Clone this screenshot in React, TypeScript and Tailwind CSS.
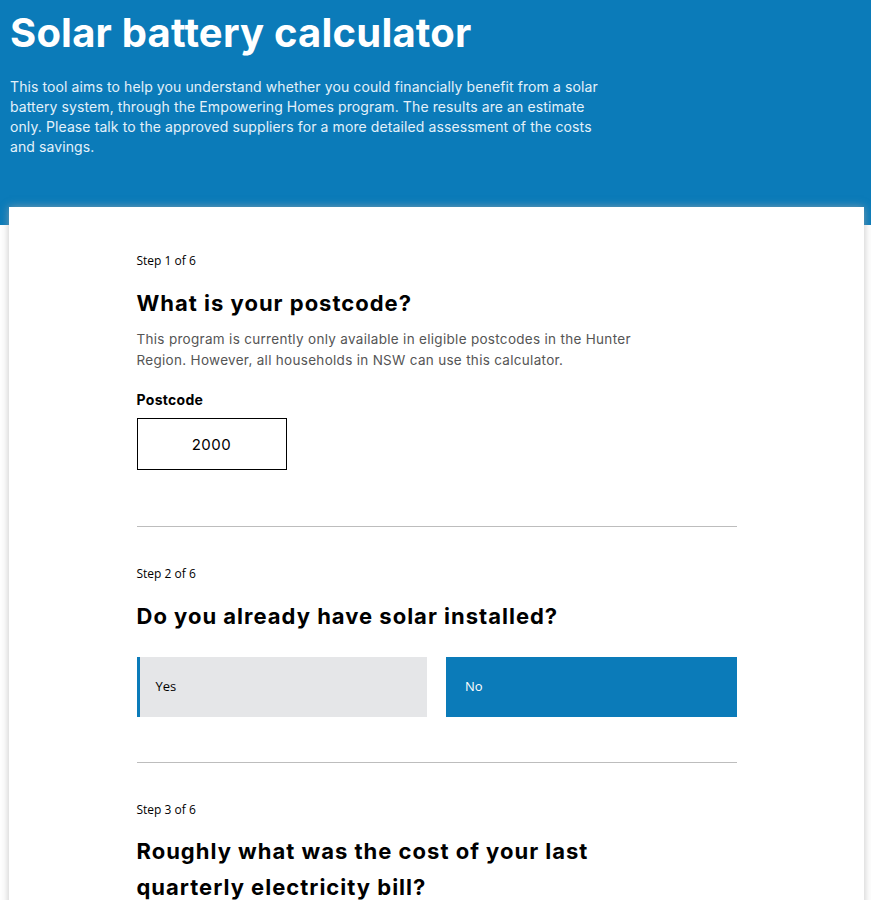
import React from 'react';

const headFont = { fontFamily: 'Inter, "Open Sans", sans-serif' };

const StepLabel: React.FunctionComponent<{n: number}> = ({n}) => (
    <p className="text-[12px] leading-[18px] text-black" style={{fontFamily: '"Open Sans", "Noto Sans", sans-serif'}}>Step {n} of 6</p>
);

const App: React.FunctionComponent = () => {
    const [solar, setSolar] = React.useState<'yes' | 'no'>('no');
    return (
        <div className="min-h-[900px] bg-white" style={headFont}>
            <div className="h-[225px] bg-[#0b7bb9] px-[10px] pt-[10px]">
                <h1 className="text-[40px] leading-[46px] font-bold text-white tracking-[0.2px]">Solar battery calculator</h1>
                <p className="mt-[21px] max-w-[600px] text-[14px] leading-[20px] tracking-[0.1px] text-[#e3f1fa]">
                    This tool aims to help you understand whether you could financially benefit from a solar battery system, through the Empowering Homes program. The results are an estimate only. Please talk to the approved suppliers for a more detailed assessment of the costs and savings.
                </p>
            </div>
            <div className="relative ml-[9px] mr-[7px] -mt-[18px] bg-white shadow-[0_0_8px_rgba(170,170,170,0.7)] pt-[45px] pb-10">
                <div className="mx-auto max-w-[600px]">
                    <StepLabel n={1}/>
                    <h2 className="mt-[17px] text-[22px] leading-[32px] tracking-[1px] font-bold text-black">What is your postcode?</h2>
                    <p className="mt-[10px] max-w-[500px] text-[13.5px] leading-[21px] tracking-[0.3px] text-[#555]">
                        This program is currently only available in eligible postcodes in the Hunter Region. However, all households in NSW can use this calculator.
                    </p>
                    <label htmlFor="postcode" className="mt-[19px] block text-[14px] leading-[20px] tracking-[0.3px] font-bold text-black">Postcode</label>
                    <input id="postcode" defaultValue="2000" className="mt-[8px] block h-[52px] w-[150px] border border-black text-center text-[15px] tracking-[0.5px] text-black outline-none"/>
                    <hr className="mt-[56px] border-t border-[#bdbdbd]"/>
                    <div className="mt-[38px]">
                        <StepLabel n={2}/>
                    </div>
                    <h2 className="mt-[17px] text-[22px] leading-[32px] tracking-[1px] font-bold text-black">Do you already have solar installed?</h2>
                    <div className="mt-[25px] grid grid-cols-2 gap-[19px]" style={{fontFamily: '"Open Sans", "Noto Sans", sans-serif'}}>
                        <button onClick={() => setSolar('yes')} className={solar === 'yes' ? 'h-[60px] bg-[#0b7bb9] pl-[19px] text-left text-[13px] text-white' : 'h-[60px] border-l-[3px] border-[#0b7bb9] bg-[#e5e6e8] pl-[16px] text-left text-[13px] text-black'}>Yes</button>
                        <button onClick={() => setSolar('no')} className={solar === 'no' ? 'h-[60px] bg-[#0b7bb9] pl-[19px] text-left text-[13px] text-white' : 'h-[60px] border-l-[3px] border-[#0b7bb9] bg-[#e5e6e8] pl-[16px] text-left text-[13px] text-black'}>No</button>
                    </div>
                    <hr className="mt-[45px] border-t border-[#bdbdbd]"/>
                    <div className="mt-[38px]">
                        <StepLabel n={3}/>
                    </div>
                    <h2 className="mt-[14px] max-w-[500px] text-[22px] leading-[36px] tracking-[1px] font-bold text-black">Roughly what was the cost of your last quarterly electricity bill?</h2>
                </div>
            </div>
        </div>
    );
};

export default App;
